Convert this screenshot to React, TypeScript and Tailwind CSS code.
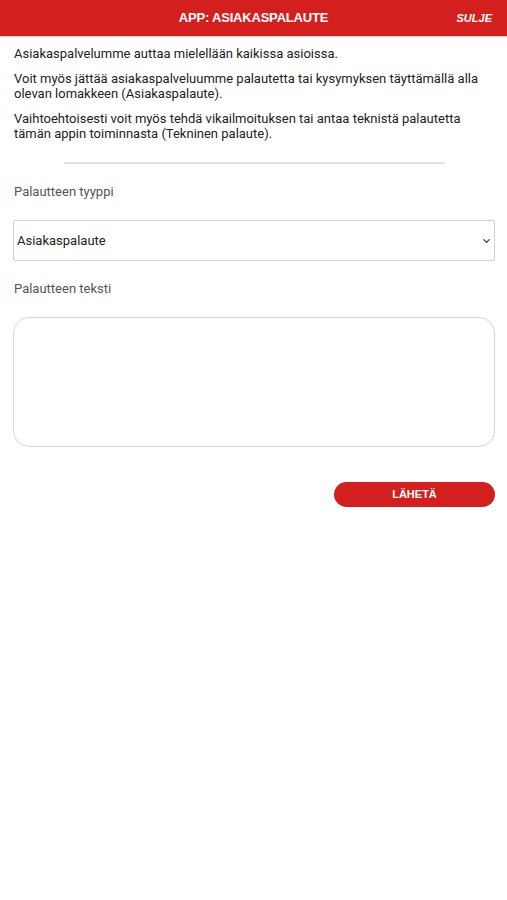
import { ChevronDown } from 'lucide-react';

const PARAGRAPHS = [
  'Asiakaspalvelumme auttaa mielellään kaikissa asioissa.',
  'Voit myös jättää asiakaspalveluumme palautetta tai kysymyksen täyttämällä alla olevan lomakkeen (Asiakaspalaute).',
  'Vaihtoehtoisesti voit myös tehdä vikailmoituksen tai antaa teknistä palautetta tämän appin toiminnasta (Tekninen palaute).',
];

export default function App() {
  return (
    <div className="min-h-[900px] bg-white font-['Roboto',sans-serif] text-[13px] text-[#222]">
      {/* Header */}
      <header className="relative flex h-[36px] items-center justify-center bg-[#d41f1f] shadow-[0_1px_0_#f3c9c9]">
        <h1 className="font-['Liberation_Sans',Arial,sans-serif] text-[13px] font-bold tracking-[-0.2px] text-white">
          APP: ASIAKASPALAUTE
        </h1>
        <button className="absolute right-[15px] top-1/2 -translate-y-1/2 font-['Liberation_Sans',Arial,sans-serif] text-[11px] font-bold italic text-white">
          SULJE
        </button>
      </header>

      <main className="pl-[13px] pr-[12px] pt-[10px]">
        {/* Intro */}
        <div className="flex flex-col gap-[10px] pl-px">
          {PARAGRAPHS.map((p) => (
            <p key={p} className="leading-[15px]">
              {p}
            </p>
          ))}
        </div>

        <div className="mx-auto mt-[21px] h-[2px] w-[381px] bg-[#e2e2e2]" />

        {/* Form */}
        <label className="mt-[20px] block pl-px leading-[15px] text-[#555]">Palautteen tyyppi</label>
        <div className="relative mt-[21px]">
          <select className="h-[41px] w-full appearance-none rounded-[2px] border border-[#cfcfcf] bg-white pl-[3px] text-[13px] text-[#222] outline-none">
            <option>Asiakaspalaute</option>
            <option>Tekninen palaute</option>
          </select>
          <ChevronDown
            size={11}
            strokeWidth={2.5}
            className="pointer-events-none absolute right-[3px] top-1/2 -translate-y-1/2 text-[#333]"
          />
        </div>

        <label className="mt-[20px] block pl-px leading-[15px] text-[#555]">Palautteen teksti</label>
        <textarea className="mt-[21px] block h-[130px] w-full resize-none rounded-[16px] border border-[#d5d5d5] p-2 outline-none" />

        <div className="mt-[35px] flex justify-end">
          <button className="h-[25px] w-[161px] rounded-full bg-[#d41f1f] font-['Liberation_Sans',Arial,sans-serif] text-[11px] font-bold text-white">
            LÄHETÄ
          </button>
        </div>
      </main>
    </div>
  );
}
